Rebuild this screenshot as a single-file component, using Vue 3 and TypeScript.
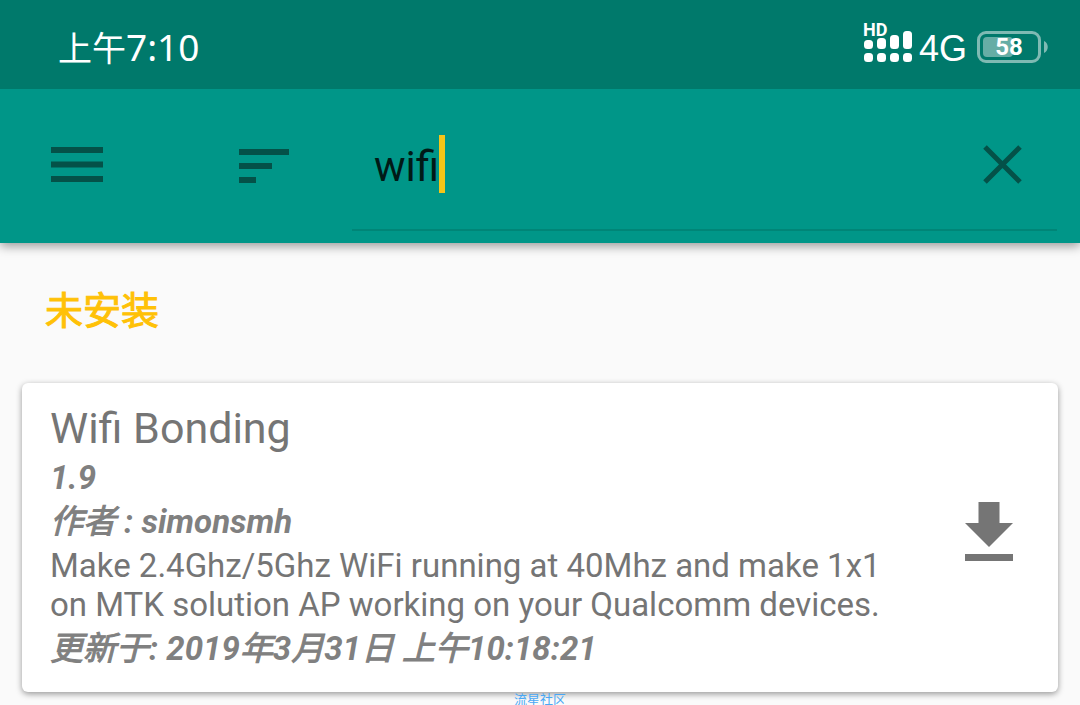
<script setup lang="ts">
import { ref } from 'vue'

const query = ref('wifi')
const battery = 58

const module = {
  name: 'Wifi Bonding',
  version: '1.9',
  author: 'simonsmh',
  description:
    'Make 2.4Ghz/5Ghz WiFi running at 40Mhz and make 1x1 on MTK solution AP working on your Qualcomm devices.',
}
</script>

<template>
  <div class="screen">
    <div class="status">
      <div class="clock"><span class="period">上午</span>7:10</div>
      <div class="indicators">
        <div class="signal">
          <span class="hd">HD</span>
          <svg width="48" height="32" viewBox="0 0 48 32" fill="#fff" aria-hidden="true">
            <rect x="0" y="9" width="9" height="9" rx="3.5" />
            <rect x="13" y="7" width="9" height="11" rx="3.5" />
            <rect x="26" y="4" width="9" height="14" rx="3.5" />
            <rect x="39" y="0" width="9" height="18" rx="3.5" />
            <rect x="0" y="22" width="9" height="9" rx="3.5" />
            <rect x="13" y="22" width="9" height="9" rx="3.5" />
            <rect x="26" y="22" width="9" height="9" rx="3.5" />
            <rect x="39" y="22" width="9" height="9" rx="3.5" />
          </svg>
        </div>
        <span class="network">4G</span>
        <div class="battery">
          <div class="cell">
            <div class="charge" :style="{ width: battery + '%' }"></div>
            <span class="percent">{{ battery }}</span>
          </div>
          <svg width="4" height="12" viewBox="0 0 4 12" aria-hidden="true">
            <path d="M0 0C5 2 5 10 0 12Z" fill="#7fbab3" />
          </svg>
        </div>
      </div>
    </div>

    <header class="toolbar">
      <button class="icon menu" type="button" aria-label="Menu">
        <svg width="52" height="38" viewBox="0 0 52 38" fill="#045148">
          <path d="M0 0H52V6H0ZM0 14.500H52V20.500H0ZM0 29H52V35H0Z" />
        </svg>
      </button>
      <button class="icon sort" type="button" aria-label="Sort">
        <svg width="50" height="34" viewBox="0 0 50 34" fill="#045148">
          <path d="M0 0H50V6H0ZM0 14H33V20H0ZM0 28H17V34H0Z" />
        </svg>
      </button>
      <div class="search">
        <input v-model="query" class="query" type="text" size="1" aria-label="Search" />
        <span class="caret"></span>
        <button class="icon clear" type="button" aria-label="Clear" @click="query = ''">
          <svg width="40" height="40" viewBox="0 0 40 40" stroke="#045148" stroke-width="5">
            <path d="M2 3L37 38M37 3L2 38" />
          </svg>
        </button>
      </div>
    </header>

    <main class="content">
      <h2 class="section">未安装</h2>
      <article class="card">
        <div class="info">
          <h3 class="name">{{ module.name }}</h3>
          <p class="meta">{{ module.version }}</p>
          <p class="meta"><span class="han">作者</span> : {{ module.author }}</p>
          <p class="description">{{ module.description }}</p>
          <p class="meta">
            <span class="han">更新于</span>: 2019<span class="han">年</span>3<span class="han">月</span>31<span class="han">日</span> <span class="han">上午</span>10:18:21
          </p>
        </div>
        <button class="icon download" type="button" aria-label="Download">
          <svg width="50" height="60" viewBox="0 0 50 60" fill="#757575">
            <path d="M14.500 0H35.500V21H49L25 45L1 21H14.500ZM1 52H49V59H1Z" />
          </svg>
        </button>
      </article>
      <footer class="mark">流星社区</footer>
    </main>
  </div>
</template>

<style>
body {
  margin: 0;
  background: #fafafa;
}
</style>

<style scoped>
.screen {
  min-height: 100vh;
  display: flex;
  flex-direction: column;
  background: #fafafa;
  font-family: Roboto, "Noto Sans CJK SC", sans-serif;
}

.status {
  position: relative;
  z-index: 1;
  flex: none;
  height: 89px;
  box-sizing: border-box;
  padding: 5px 32px 0 58px;
  display: flex;
  align-items: center;
  justify-content: space-between;
  background: #00796b;
  color: #fff;
}

.clock {
  font: 37px/48px "Noto Sans", "Noto Sans CJK SC", sans-serif;
}

.period {
  font-size: 34px;
}

.indicators {
  display: flex;
  align-items: center;
}

.signal {
  position: relative;
  display: flex;
}

.hd {
  position: absolute;
  left: -1px;
  top: -10px;
  font: bold 18px/18px Roboto, sans-serif;
}

.network {
  margin: 0 10px 0 7px;
  padding-top: 4px;
  font: 36px/40px "Liberation Sans", Arial, sans-serif;
}

.battery {
  display: flex;
  align-items: center;
  gap: 3px;
}

.cell {
  position: relative;
  width: 64px;
  height: 32px;
  box-sizing: border-box;
  padding: 3px;
  border: 3px solid #7fbab3;
  border-radius: 9px;
}

.charge {
  height: 100%;
  border-radius: 4px;
  background: #66ada5;
}

.percent {
  position: absolute;
  inset: 0;
  text-align: center;
  font: bold 24px/27px Roboto, sans-serif;
}

.toolbar {
  flex: none;
  height: 154px;
  box-sizing: border-box;
  padding: 0 23px 0 51px;
  display: flex;
  align-items: center;
  background: #009688;
  box-shadow: 0 3px 10px rgba(0, 0, 0, 0.4);
}

.icon {
  flex: none;
  padding: 0;
  border: 0;
  background: none;
  display: flex;
}

.sort {
  margin-left: 136px;
}

.search {
  flex: 1;
  align-self: stretch;
  margin: 0 0 12px 63px;
  padding: 10px 34px 0 22px;
  display: flex;
  align-items: center;
  border-bottom: 2px solid #008577;
}

.query {
  field-sizing: content;
  min-width: 0;
  padding: 6px 0 0;
  border: 0;
  outline: 0;
  background: none;
  color: #001a17;
  font: 42px/58px Roboto, sans-serif;
}

.caret {
  width: 6px;
  height: 58px;
  background: #f5c518;
}

.clear {
  margin-left: auto;
}

.content {
  padding: 37px 22px 0;
}

.section {
  margin: 0 0 47px 23px;
  color: #ffc107;
  font: 400 38px/56px "Noto Sans CJK SC", sans-serif;
  -webkit-text-stroke: 1px currentColor;
}

.card {
  display: flex;
  align-items: center;
  box-sizing: border-box;
  min-height: 309px;
  padding: 16px 44px 20px 28px;
  border-radius: 6px;
  background: #fff;
  box-shadow: 0 2px 6px rgba(0, 0, 0, 0.4);
  color: #757575;
}

.info {
  flex: 1;
  padding-right: 60px;
}

.name {
  margin: 0;
  font-size: 43px;
  line-height: 56px;
  font-weight: 400;
}

.meta {
  margin: 0;
  font-size: 33px;
  line-height: 44px;
  font-weight: 700;
  font-style: italic;
  color: #808080;
}

.han {
  font-weight: 400;
  -webkit-text-stroke: 1px currentColor;
}

.description {
  margin: 2px 0 3px;
  font-size: 33px;
  line-height: 39px;
}

.download {
  margin-bottom: 8px;
}

.mark {
  text-align: center;
  color: #4aa8f5;
  font: 13px/13px "Noto Sans CJK SC", sans-serif;
}
</style>
